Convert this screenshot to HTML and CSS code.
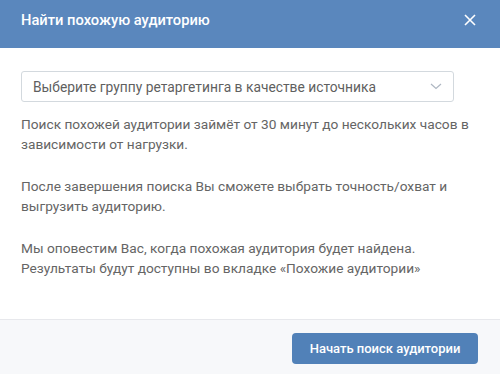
FILE: index.html
```html
<!DOCTYPE html>
<html lang="ru">
<head>
  <meta charset="UTF-8" />
  <title>Найти похожую аудиторию</title>
  <link rel="stylesheet" href="styles.css">
</head>
<body>
  <div class="box">
    <div class="box-header">
      <span class="box-title">Найти похожую аудиторию</span>
      <svg class="box-close" width="12" height="12" viewBox="0 0 12 12">
        <path d="M1 1 L11 11 M11 1 L1 11" stroke="#fff" stroke-width="1.6" fill="none" />
      </svg>
    </div>

    <div class="box-body">
      <div class="dropdown">
        <span>Выберите группу ретаргетинга в качестве источника</span>
        <svg class="dropdown-arrow" width="12" height="7" viewBox="0 0 12 7">
          <path d="M1 1 L6 5.5 L11 1" stroke="#aeb7c2" stroke-width="1.2" fill="none" />
        </svg>
      </div>
      <p>Поиск похожей аудитории займёт от 30 минут до нескольких часов в зависимости от нагрузки.</p>
      <p>После завершения поиска Вы сможете выбрать точность/охват и выгрузить аудиторию.</p>
      <p>Мы оповестим Вас, когда похожая аудитория будет найдена.<br>Результаты будут доступны во вкладке «Похожие аудитории»</p>
    </div>

    <div class="box-footer">
      <button class="btn">Начать поиск аудитории</button>
    </div>
  </div>
</body>
</html>
```

FILE: styles.css
```css
body { margin: 0; font-family: Roboto, "Open Sans", sans-serif; font-size: 13.7px; background: #fff; }
.box { width: 500px; height: 374px; display: flex; flex-direction: column; }
.box-header { height: 48px; background: #5a87bd; color: #fff; display: flex; align-items: center; justify-content: space-between; padding: 0 24px 0 21px; box-sizing: border-box; }
.box-title { font-size: 14.7px; font-weight: 500; margin-top: -9px; }
.box-close { margin-top: -8px; }
.box-body { flex: 1; padding: 23px 18px 0 21px; color: #656565; line-height: 20px; }
.dropdown { height: 31px; width: 433px; box-sizing: border-box; border: 1px solid #d3d9de; border-radius: 3px; display: flex; align-items: center; justify-content: space-between; padding: 0 11px; color: #5f5f5f; font-size: 13.8px; }
.dropdown-arrow { margin-right: 0; }
.box-body p { margin: 12px 0 22px; }
.box-footer { height: 55px; background: #f7f8fa; border-top: 1px solid #e7e8ec; display: flex; justify-content: flex-end; align-items: center; padding: 0 22px; box-sizing: border-box; }
.btn { height: 31px; width: 186px; background: #5181b8; color: #fff; border: none; border-radius: 4px; font-family: inherit; font-size: 13px; font-weight: 500; margin-top: 2px; }
```
